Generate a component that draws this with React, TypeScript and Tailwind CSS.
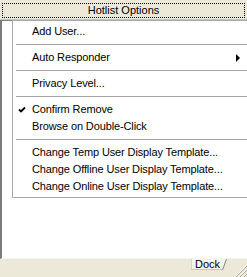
import React from "react";

const Sep = () => (
  <div className="h-[9px] flex items-center">
    <div className="ml-[3px] h-px w-full bg-[#a6a6a6]" />
  </div>
);

const Item = ({ label, checked, sub }: { label: string; checked?: boolean; sub?: boolean }) => (
  <div className="relative h-[17px] flex items-center pl-[19px] whitespace-nowrap tracking-[-0.12px]">
    {checked && (
      <svg className="absolute left-[5px] top-[5px]" width="8" height="8" viewBox="0 0 8 8">
        <path d="M1 3.5 L3 5.5 L7 1.5" stroke="#000" strokeWidth="1.8" fill="none" />
      </svg>
    )}
    <span>{label}</span>
    {sub && (
      <svg className="absolute left-[223px] top-[5px]" width="5" height="8" viewBox="0 0 5 8">
        <polygon points="0,0 4,4 0,8" fill="#000" />
      </svg>
    )}
  </div>
);

export default function App() {
  return (
    <div
      className="w-[247px] h-[277px] overflow-hidden flex flex-col bg-[#ECE9D8] text-black text-[11px] leading-none"
      style={{ fontFamily: '"Liberation Sans", Arial, sans-serif' }}
    >
      <div className="h-[19px] pt-[3px] px-[2px] pb-[1px] flex-none">
        <div className="h-[15px] border border-dotted border-black flex items-center justify-center">
          Hotlist Options
        </div>
      </div>
      <div className="h-px bg-[#c4c4c4] flex-none" />
      <div className="relative flex-1 bg-white border-t border-t-[#808080] border-l-2 border-l-[#7a7a7a] border-b border-b-[#f4f4f4]">
        <div className="absolute left-[10px] -top-px w-[250px] bg-white border-l border-t border-b border-[#a8a8a8] pt-[2px] pb-[2px]">
          <Item label="Add User..." />
          <Sep />
          <Item label="Auto Responder" sub />
          <Sep />
          <Item label="Privacy Level..." />
          <Sep />
          <Item label="Confirm Remove" checked />
          <Item label="Browse on Double-Click" />
          <Sep />
          <Item label="Change Temp User Display Template..." />
          <Item label="Change Offline User Display Template..." />
          <Item label="Change Online User Display Template..." />
        </div>
      </div>
      <div className="h-[18px] flex-none relative flex">
        <div className="ml-[191px] h-[11px] relative flex items-center pl-[3px] pr-[7px] bg-[#f5f4ee] border-l border-l-[#d8d6c8] border-b border-b-[#c9c7b8]">
          <span>Dock</span>
          <svg className="absolute right-0 top-0" width="5" height="11" viewBox="0 0 5 11">
            <polygon points="0,11 4,0 5,0 5,11" fill="#ECE9D8" />
            <line x1="0.5" y1="11" x2="4.5" y2="0" stroke="#8a8878" strokeWidth="1" />
          </svg>
        </div>
        <svg className="absolute right-0 bottom-0" width="12" height="12" viewBox="0 0 12 12">
          <line x1="11" y1="1" x2="1" y2="11" stroke="#fff" />
          <line x1="12" y1="1" x2="1" y2="12" stroke="#aca899" />
          <line x1="11" y1="5" x2="5" y2="11" stroke="#fff" />
          <line x1="12" y1="5" x2="5" y2="12" stroke="#aca899" />
          <line x1="11" y1="9" x2="9" y2="11" stroke="#fff" />
          <line x1="12" y1="9" x2="9" y2="12" stroke="#aca899" />
        </svg>
      </div>
    </div>
  );
}
